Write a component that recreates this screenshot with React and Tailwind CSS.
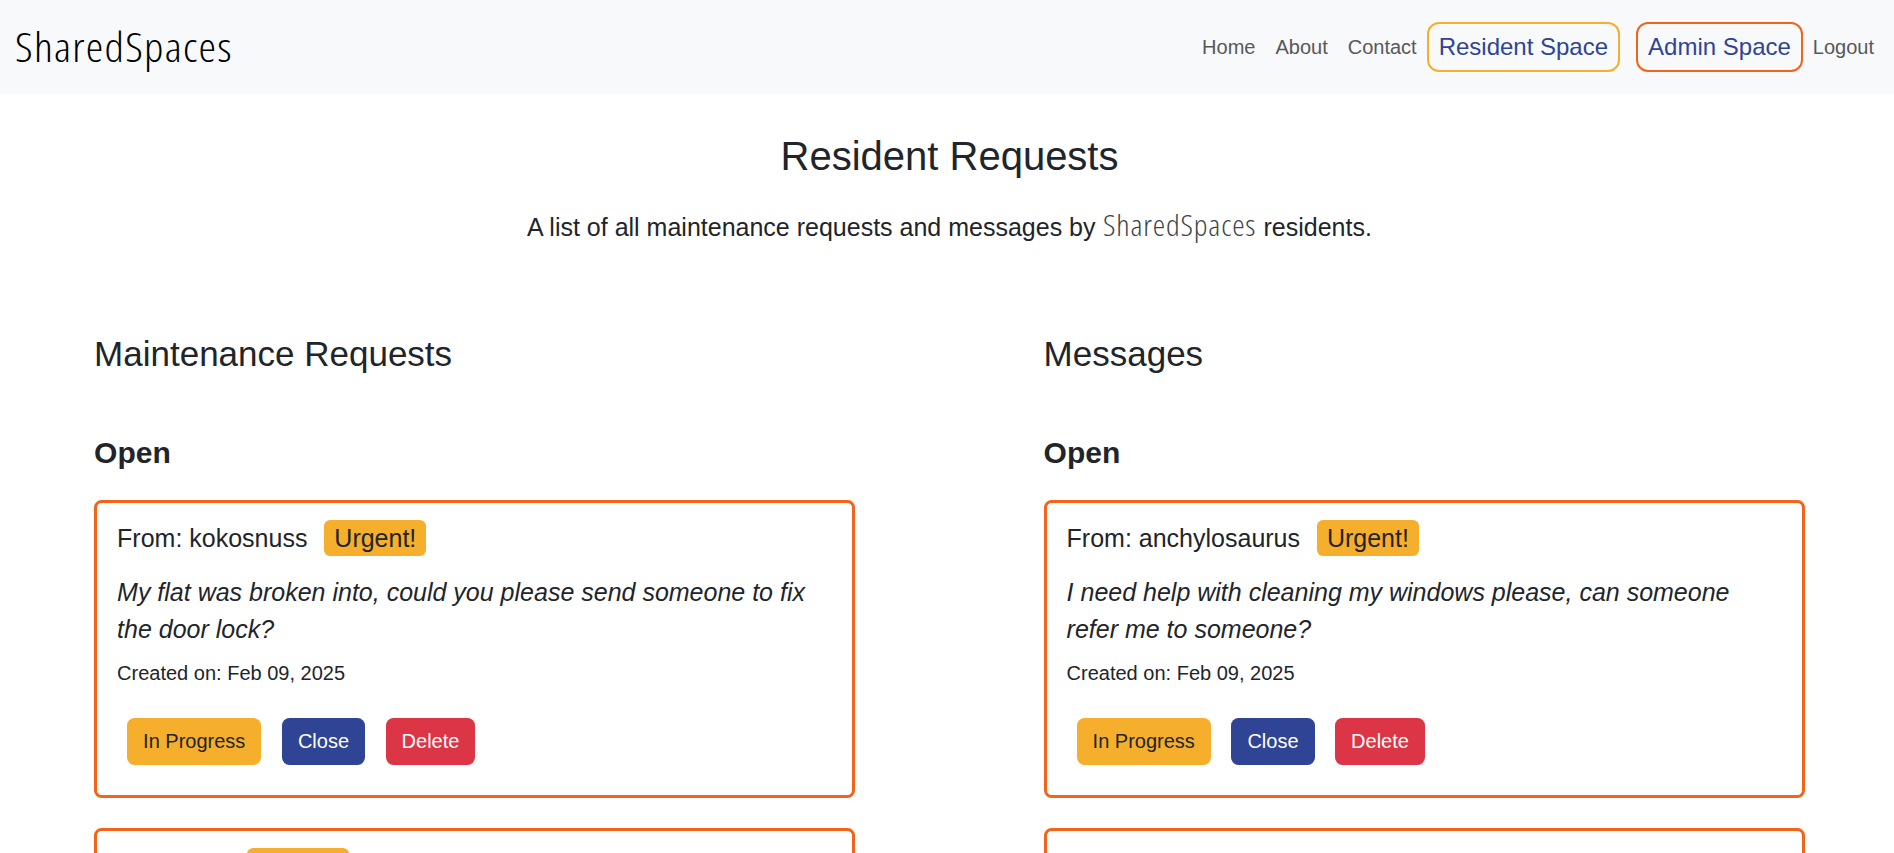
const maintenance = [
  {
    from: "kokosnuss",
    urgent: true,
    text: "My flat was broken into, could you please send someone to fix the door lock?",
    date: "Feb 09, 2025",
  },
  { from: "ava", urgent: true },
];

const messages = [
  {
    from: "anchylosaurus",
    urgent: true,
    text: "I need help with cleaning my windows please, can someone refer me to someone?",
    date: "Feb 09, 2025",
  },
  { from: "ava", urgent: false },
];

function NavLink({ children }) {
  return (
    <a href="#" className="px-[10px] text-[20px] leading-[30px] text-[#575859]">
      {children}
    </a>
  );
}

function Button({ className, children }) {
  return (
    <button className={`h-[47px] rounded-[7.5px] px-4 text-[20px] leading-[30px] ${className}`}>
      {children}
    </button>
  );
}

function Card({ item }) {
  return (
    <article className="mb-[30px] h-[298px] rounded-[7.5px] border-[3px] border-[#f26419] px-5 pt-[17px]">
      <div className="flex h-[38px] items-baseline gap-[16.9px] text-[25px] leading-[37.5px]">
        <span>From: {item.from}</span>
        {item.urgent && (
          <span className="h-9 rounded-[6px] bg-[#f6ae2d] px-[10px] py-[5.5px] leading-[25px]">Urgent!</span>
        )}
      </div>
      {item.text && (
        <>
          <p className="mt-[15.6px] h-[75px] text-[25px] leading-[37.5px] italic">{item.text}</p>
          <p className="mt-[9.4px] text-[20px] leading-[30px]">Created on: {item.date}</p>
          <div className="mt-[30px] ml-[10px] flex gap-[20.56px]">
            <Button className="bg-[#f6ae2d]">In Progress</Button>
            <Button className="bg-[#2f4494] text-white">Close</Button>
            <Button className="bg-[#dc3545] text-white">Delete</Button>
          </div>
        </>
      )}
    </article>
  );
}

function Column({ title, items }) {
  return (
    <section>
      <h2 className="text-[35px] leading-[42px]">{title}</h2>
      <h3 className="mt-[60px] mb-[29px] text-[30px] leading-9 font-bold">Open</h3>
      {items.map((item, i) => (
        <Card key={i} item={item} />
      ))}
    </section>
  );
}

export default function App() {
  return (
    <div className="h-[853px] overflow-hidden bg-white font-['Liberation_Sans',Arial,sans-serif] text-[#212529]">
      <header className="flex h-[94px] items-center justify-between bg-[#f8f9fb] pr-[10px] pl-[15px]">
        <a href="#" className="origin-left scale-x-[1.08] pb-[3px] font-['Open_Sans',sans-serif] text-[41px] leading-[50px] font-light tracking-[1.15px] text-black [font-stretch:75%]">
          SharedSpaces
        </a>
        <nav className="flex items-center">
          <NavLink>Home</NavLink>
          <NavLink>About</NavLink>
          <NavLink>Contact</NavLink>
          <a href="#" className="mr-4 flex h-[50px] items-center rounded-[12px] border-2 border-[#f6ae2d] px-[10px] text-[24px] text-[#2f4494]">
            Resident Space
          </a>
          <a href="#" className="flex h-[50px] items-center rounded-[12px] border-2 border-[#f26419] px-[10px] text-[24px] text-[#2f4494]">
            Admin Space
          </a>
          <NavLink>Logout</NavLink>
        </nav>
      </header>
      <main className="w-[1899px]">
        <h1 className="pt-[38px] text-center text-[40px] leading-[48px]">Resident Requests</h1>
        <p className="mt-[28.6px] flex h-[37.5px] items-baseline justify-center text-[25px] leading-[37.5px]">
          <span>A list of all maintenance requests and messages by</span>
          <span className="mr-[7px] ml-2 w-[153px] origin-left scale-x-[1.08] font-['Open_Sans',sans-serif] text-[29px] leading-[30px] font-light tracking-[0.75px] text-[#40454a] [font-stretch:75%]">
            SharedSpaces
          </span>
          <span>residents.</span>
        </p>
        <div className="mt-[86.9px] grid grid-cols-[761px_761px] gap-[188.5px] pl-[94.1px]">
          <Column title="Maintenance Requests" items={maintenance} />
          <Column title="Messages" items={messages} />
        </div>
      </main>
    </div>
  );
}
